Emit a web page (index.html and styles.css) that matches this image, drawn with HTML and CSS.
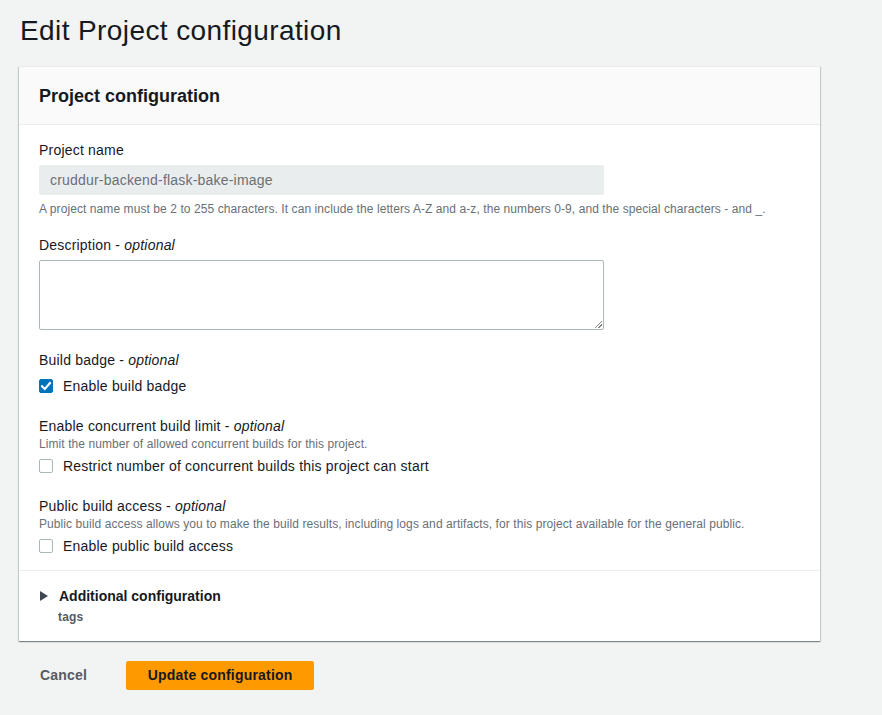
FILE: index.html
```html
<!DOCTYPE html>
<html lang="en">
<head>
<meta charset="utf-8">
<title>Edit Project configuration</title>
<link rel="stylesheet" href="styles.css">
</head>
<body>
<main class="page">
  <h1 class="page-title">Edit Project configuration</h1>
  <section class="card">
    <header class="card-header">
      <h2>Project configuration</h2>
    </header>
    <div class="card-body">
      <div class="field">
        <label class="label">Project name</label>
        <div class="input disabled">cruddur-backend-flask-bake-image</div>
        <p class="constraint">A project name must be 2 to 255 characters. It can include the letters A-Z and a-z, the numbers 0-9, and the special characters - and _.</p>
      </div>
      <div class="field field-desc">
        <label class="label">Description - <i>optional</i></label>
        <div class="textarea"><span class="grip"></span></div>
      </div>
      <div class="field field-badge">
        <label class="label">Build badge - <i>optional</i></label>
        <div class="check-row"><span class="box checked"><svg viewBox="0 0 14 14" width="14" height="14"><path d="M3 7.2 L5.8 10 L11 4" fill="none" stroke="#fff" stroke-width="2" stroke-linecap="square"/></svg></span><span>Enable build badge</span></div>
      </div>
      <div class="field field-limit">
        <label class="label">Enable concurrent build limit - <i>optional</i></label>
        <p class="desc">Limit the number of allowed concurrent builds for this project.</p>
        <div class="check-row"><span class="box"></span><span>Restrict number of concurrent builds this project can start</span></div>
      </div>
      <div class="field field-public">
        <label class="label">Public build access - <i>optional</i></label>
        <p class="desc">Public build access allows you to make the build results, including logs and artifacts, for this project available for the general public.</p>
        <div class="check-row"><span class="box"></span><span>Enable public build access</span></div>
      </div>
    </div>
    <div class="expander">
      <div class="exp-head"><svg class="caret" viewBox="0 0 8 10" width="8" height="10"><path d="M0 0 L8 5 L0 10 Z" fill="#414750"/></svg><span>Additional configuration</span></div>
      <div class="exp-sub">tags</div>
    </div>
  </section>
  <div class="actions">
    <span class="link-btn">Cancel</span>
    <span class="primary-btn">Update configuration</span>
  </div>
</main>
</body>
</html>
```

FILE: styles.css
```css
* { box-sizing: border-box; }
html, body { margin: 0; padding: 0; }
body {
  background: #f2f3f3;
  font-family: "Liberation Sans", Arial, sans-serif;
  color: #16191f;
  width: 882px;
  height: 715px;
  overflow: hidden;
  letter-spacing: 0.2px;
}
.page { padding: 0 63px 0 19px; }
.page-title {
  margin: 0;
  padding: 14px 0 0 1px;
  font-size: 28px;
  line-height: 34px;
  font-weight: 400;
  letter-spacing: 0.4px;
  height: 66px;
}
.card {
  background: #fff;
  width: 801px;
  border-top: 1px solid #eaeded;
  box-shadow: 0 1px 1px 0 rgba(0,28,36,.3), 1px 1px 1px 0 rgba(0,28,36,.15), -1px 1px 1px 0 rgba(0,28,36,.15);
}
.card-header {
  background: #fafafa;
  border-bottom: 1px solid #eaeded;
  height: 58px;
  padding: 0 20px;
  display: flex;
  align-items: center;
}
.card-header h2 {
  margin: 0;
  font-size: 18px;
  font-weight: 700;
  line-height: 22px;
  letter-spacing: 0;
}
.card-body {
  padding: 14px 20px 13px;
  border-bottom: 1px solid #eaeded;
}
.field { display: flex; flex-direction: column; }
.label {
  font-size: 14px;
  line-height: 22px;
}
.label i { font-style: italic; }
.input {
  margin-top: 4px;
  width: 565px;
  height: 30px;
  border-radius: 2px;
  padding: 0 11px;
  font-size: 14px;
  line-height: 30px;
}
.input.disabled { background: #eaeded; color: #687078; }
.constraint, .desc {
  margin: 0;
  font-size: 12px;
  line-height: 16px;
  color: #687078;
  letter-spacing: 0.08px;
}
.constraint { margin-top: 6px; }
.field-desc { margin-top: 17px; }
.textarea {
  position: relative;
  margin-top: 4px;
  width: 565px;
  height: 70px;
  border: 1px solid #aab7b8;
  border-radius: 2px;
}
.grip {
  position: absolute;
  right: 1px;
  bottom: 1px;
  width: 7px;
  height: 7px;
  background: linear-gradient(135deg, transparent 45%, #888 45%, #888 55%, transparent 55%, transparent 70%, #888 70%, #888 80%, transparent 80%);
}
.field-badge { margin-top: 19px; }
.check-row {
  display: flex;
  align-items: center;
  gap: 10px;
  font-size: 14px;
  line-height: 22px;
  margin-top: 4px;
}
.box {
  width: 14px;
  height: 14px;
  border: 1px solid #aab7b8;
  border-radius: 2px;
  background: #fff;
  flex: none;
  display: flex;
}
.box.checked { background: #0073bb; border-color: #0073bb; }
.box.checked svg { margin: -1px; }
.field-limit { margin-top: 19px; }
.field-limit .label, .field-public .label { line-height: 20px; }
.field-limit .check-row, .field-public .check-row { margin-top: 3px; }
.field-public { margin-top: 19px; }
.expander { padding: 14px 20px 16px; }
.exp-head {
  display: flex;
  align-items: center;
  gap: 11px;
  font-size: 14px;
  font-weight: 700;
  line-height: 22px;
  color: #16191f;
  letter-spacing: 0;
}
.caret { margin-left: 1px; }
.exp-sub {
  padding-left: 19px;
  font-size: 12px;
  font-weight: 700;
  line-height: 16px;
  color: #545b64;
  margin-top: 2px;
}
.actions {
  display: flex;
  align-items: center;
  margin-top: 20px;
  padding-left: 1px;
}
.link-btn {
  font-size: 14px;
  font-weight: 700;
  color: #545b64;
  padding: 4px 20px;
  line-height: 21px;
}
.primary-btn {
  margin-left: 19px;
  background: #ff9900;
  border: 1px solid #ff9900;
  border-radius: 2px;
  font-size: 14px;
  font-weight: 700;
  color: #16191f;
  padding: 3px 20px;
  line-height: 21px;
  width: 188px;
  text-align: center;
}
```
